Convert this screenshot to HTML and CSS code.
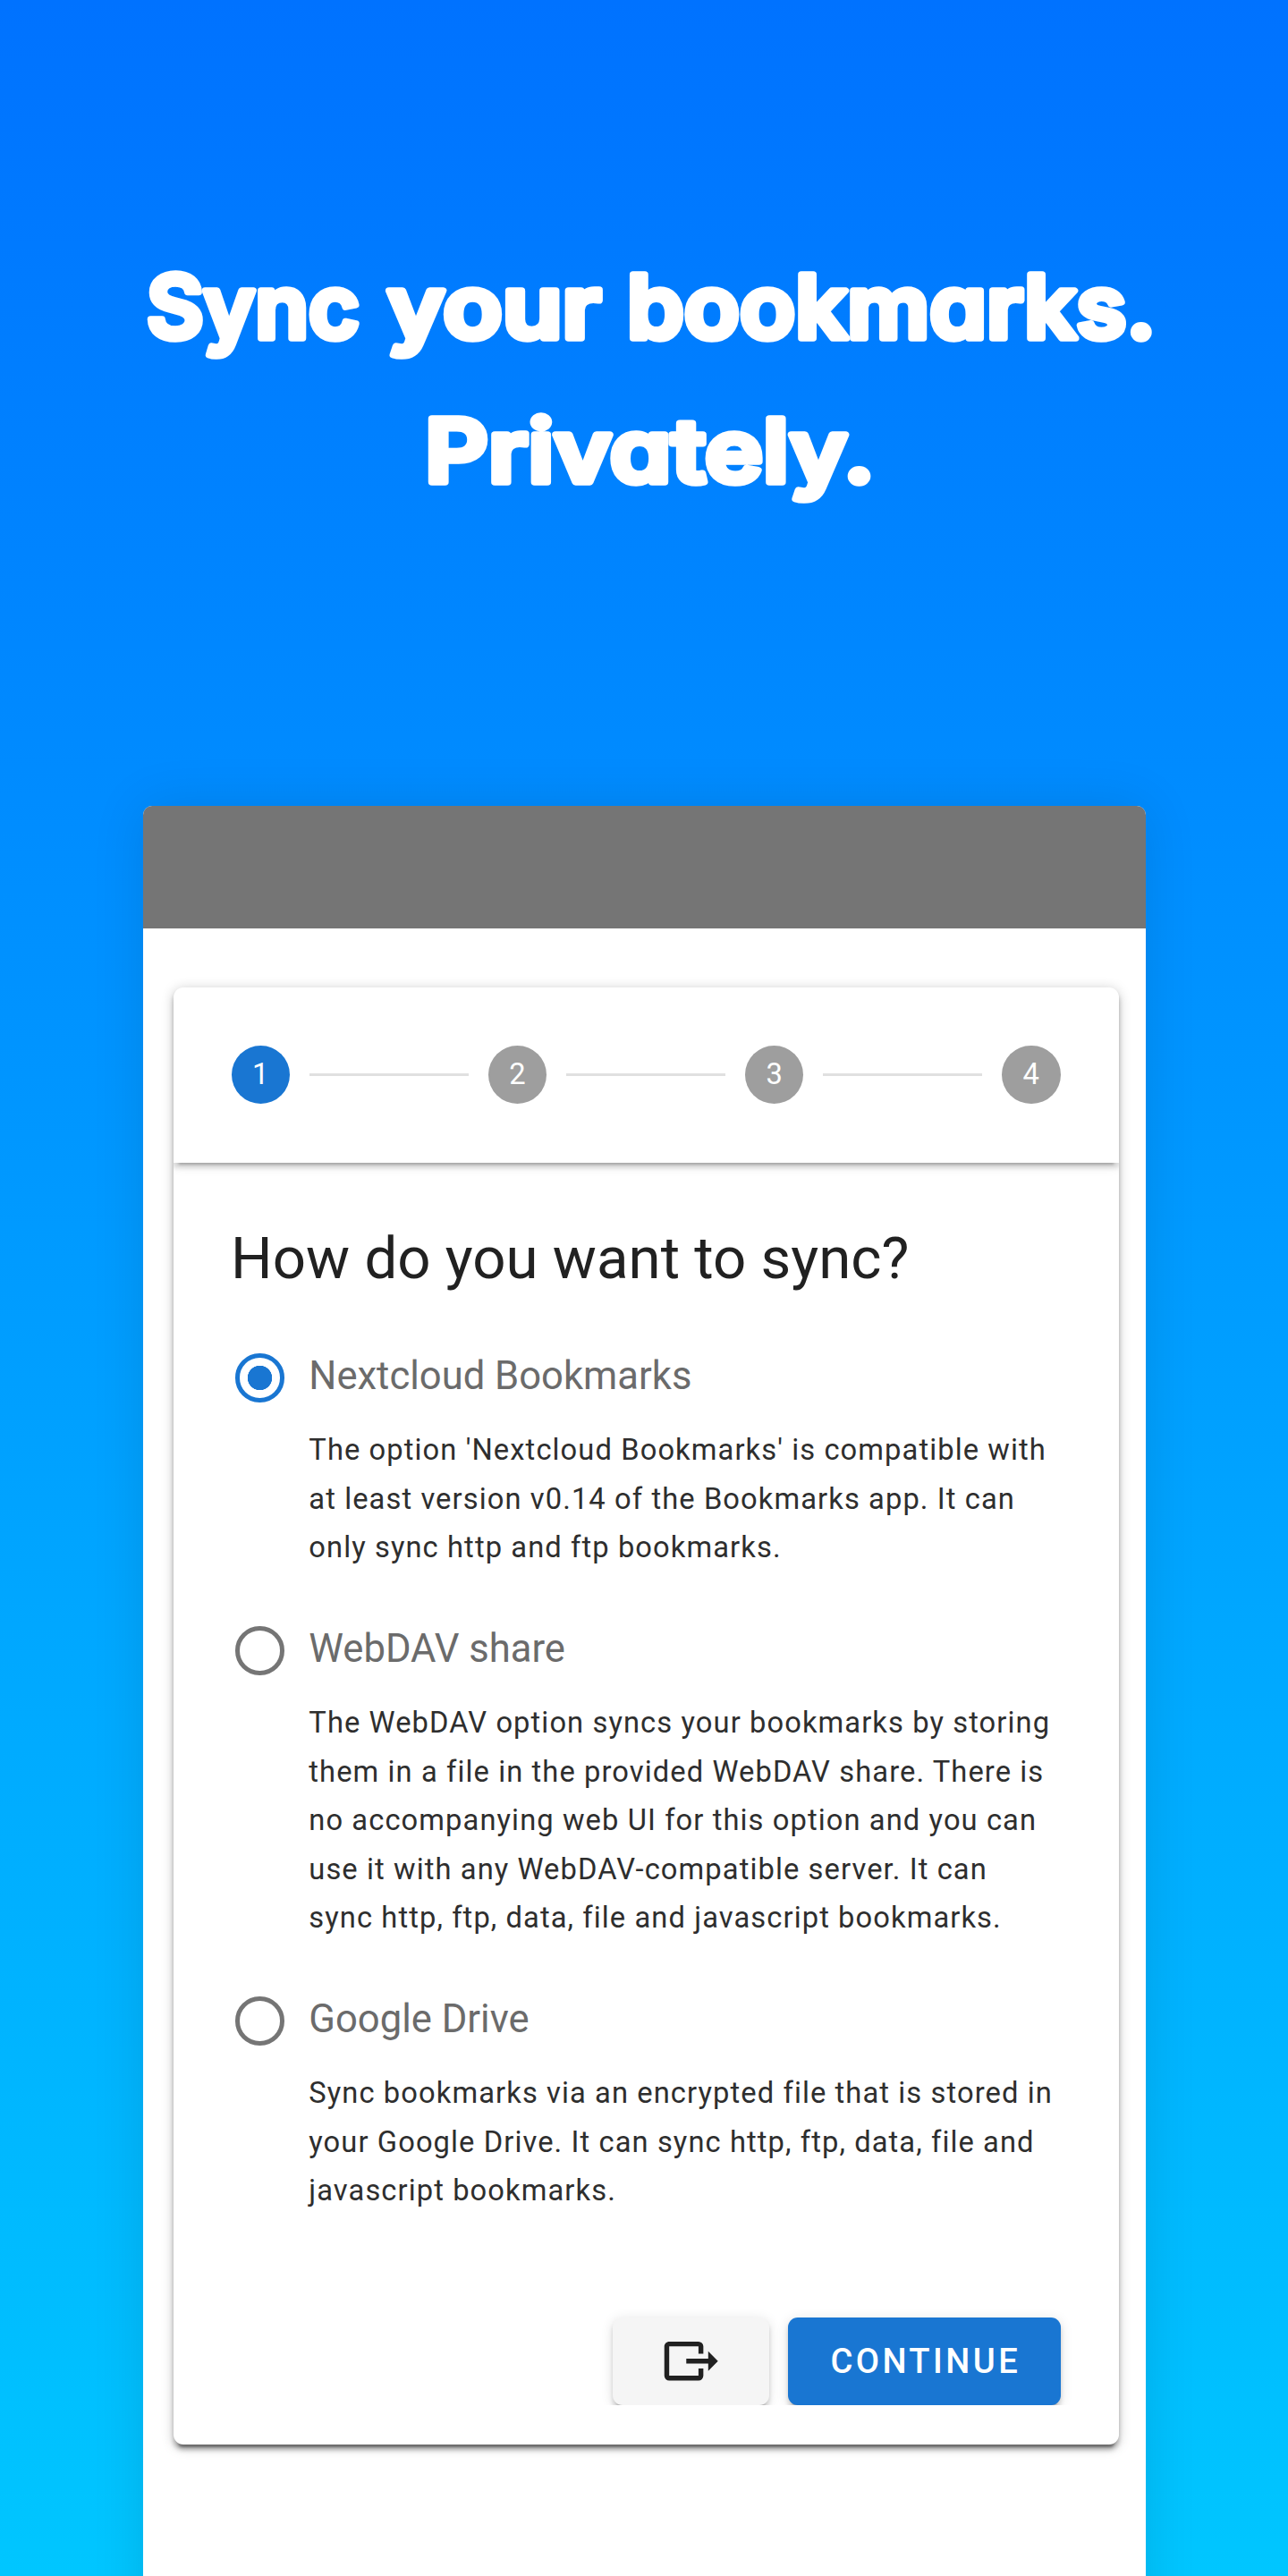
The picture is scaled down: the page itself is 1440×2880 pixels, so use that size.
FILE: index.html
```html
<!DOCTYPE html>
<html lang="en">
<head>
<meta charset="utf-8">
<title>Sync your bookmarks. Privately.</title>
<link rel="stylesheet" href="styles.css">
</head>
<body>
<main class="promo">
  <h1 class="headline">
    <svg class="headline-art" viewBox="0 0 1440 901" width="1440" height="901">
      <text x="164" y="378" textLength="238" lengthAdjust="spacingAndGlyphs">Sync</text>
      <text x="433" y="378" textLength="239" lengthAdjust="spacingAndGlyphs">your</text>
      <text x="701" y="378" textLength="591" lengthAdjust="spacingAndGlyphs">bookmarks.</text>
      <text x="475" y="539" textLength="503" lengthAdjust="spacingAndGlyphs">Privately.</text>
    </svg>
  </h1>
  <section class="phone">
    <div class="statusbar"></div>
    <div class="card">
      <div class="stepper">
        <span class="step active">1</span><span class="line"></span>
        <span class="step">2</span><span class="line"></span>
        <span class="step">3</span><span class="line"></span>
        <span class="step">4</span>
      </div>
      <div class="content">
        <h2 class="question">How do you want to sync?</h2>
        <div class="option">
          <div class="choice"><span class="radio checked"></span><span class="label">Nextcloud Bookmarks</span></div>
          <p class="description">The option 'Nextcloud Bookmarks' is compatible with<br>at least version v0.14 of the Bookmarks app. It can<br>only sync http and ftp bookmarks.</p>
        </div>
        <div class="option">
          <div class="choice"><span class="radio"></span><span class="label">WebDAV share</span></div>
          <p class="description">The WebDAV option syncs your bookmarks by storing<br>them in a file in the provided WebDAV share. There is<br>no accompanying web UI for this option and you can<br>use it with any WebDAV-compatible server. It can<br>sync http, ftp, data, file and javascript bookmarks.</p>
        </div>
        <div class="option">
          <div class="choice"><span class="radio"></span><span class="label">Google Drive</span></div>
          <p class="description">Sync bookmarks via an encrypted file that is stored in<br>your Google Drive. It can sync http, ftp, data, file and<br>javascript bookmarks.</p>
        </div>
      </div>
      <div class="actions">
        <button class="button import" aria-label="Import">
          <svg class="icon" viewBox="0 0 24 24"><path fill="currentColor" d="M23,12L19,8V11H10V13H19V16M1,18V6C1,4.89 1.9,4 3,4H15A2,2 0 0,1 17,6V9H15V6H3V18H15V15H17V18A2,2 0 0,1 15,20H3A2,2 0 0,1 1,18Z"/></svg>
        </button>
        <button class="button primary">CONTINUE</button>
      </div>
    </div>
  </section>
</main>
</body>
</html>
```
FILE: styles.css
```css
* { box-sizing: border-box; }
body { margin: 0; font-family: Roboto, sans-serif; }

.promo {
  width: 1440px;
  height: 2880px;
  overflow: hidden;
  background: linear-gradient(#0072ff, #00c6ff);
}

.headline { margin: 0; height: 901px; }
.headline-art {
  display: block;
  font-family: Inter, sans-serif;
  font-size: 98px;
  font-weight: 600;
  font-feature-settings: "cv11";
  fill: #fff;
  stroke: #fff;
  stroke-width: 7.5px;
  stroke-linejoin: round;
}

.phone {
  width: 1121px;
  height: 2100px;
  margin-left: 160px;
  border-radius: 10px;
  background: #fff;
  box-shadow: 0 0 60px rgba(0, 0, 0, .11);
}
.statusbar {
  height: 137px;
  border-radius: 10px 10px 0 0;
  background: #757575;
}

.card {
  width: 1057px;
  height: 1629.7px;
  margin: 65.6px 0 0 33.5px;
  border-radius: 10.9px;
  background: #fff;
  box-shadow: 0 8.2px 2.7px -5.5px rgba(0, 0, 0, .36),
    0 5.5px 5.5px rgba(0, 0, 0, .26),
    0 2.7px 13.6px rgba(0, 0, 0, .22);
  display: flex;
  flex-direction: column;
  overflow: hidden;
}

.stepper {
  flex: none;
  height: 196.2px;
  padding: 0 65px;
  display: flex;
  align-items: center;
  gap: 21.8px;
  box-shadow: 0 8.2px 2.7px -5.5px rgba(0, 0, 0, .2),
    0 5.5px 5.5px rgba(0, 0, 0, .14),
    0 2.7px 13.6px rgba(0, 0, 0, .12);
}
.step {
  flex: none;
  width: 65.5px;
  height: 65.5px;
  border-radius: 50%;
  background: #9e9e9e;
  color: #fff;
  font-size: 32.7px;
  line-height: 65.5px;
  text-align: center;
}
.step.active { background: #1976d2; }
.line { flex: 1; height: 2.7px; background: #e0e0e0; }

.content { flex: 1; padding: 63px 0 0 64.6px; }
.question {
  margin: 0 0 57.7px;
  font-size: 65.4px;
  font-weight: 400;
  line-height: 87.3px;
  color: #212121;
}
.option { margin-bottom: 55px; }
.choice {
  height: 65.45px;
  display: flex;
  align-items: center;
  gap: 27.3px;
}
.radio {
  width: 54.5px;
  height: 54.5px;
  margin-left: 5.4px;
  border: 5.45px solid #757575;
  border-radius: 50%;
}
.radio.checked {
  border-color: #1976d2;
  background: radial-gradient(circle, #1976d2 13.4px, #fff 14px);
}
.label {
  padding-bottom: 4px;
  font-size: 43.6px;
  line-height: 55px;
  color: #6b6b6b;
}
.description {
  margin: 20.9px 0 0 87.2px;
  font-size: 32.7px;
  line-height: 54.54px;
  letter-spacing: 1.09px;
  color: #2e2e2e;
  white-space: nowrap;
}

.actions {
  flex: none;
  height: 121.5px;
  margin-bottom: 44px;
  padding: 23px 65px 0 0;
  display: flex;
  justify-content: flex-end;
  gap: 21.5px;
  overflow: hidden;
}
.button {
  height: 98.5px;
  border: 0;
  border-radius: 10.9px;
  padding: 0;
  font-family: Roboto, sans-serif;
  font-size: 38.18px;
  font-weight: 500;
  letter-spacing: 3.41px;
  display: flex;
  align-items: center;
  justify-content: center;
  box-shadow: 0 8.2px 2.7px -5.5px rgba(0, 0, 0, .2),
    0 5.5px 5.5px rgba(0, 0, 0, .14),
    0 2.7px 13.6px rgba(0, 0, 0, .12);
}
.import { width: 174.5px; background: #f5f5f5; color: #212121; }
.primary { width: 304.5px; padding-left: 3px; background: #1976d2; color: #fff; }
.icon { width: 65.45px; height: 65.45px; }
```
